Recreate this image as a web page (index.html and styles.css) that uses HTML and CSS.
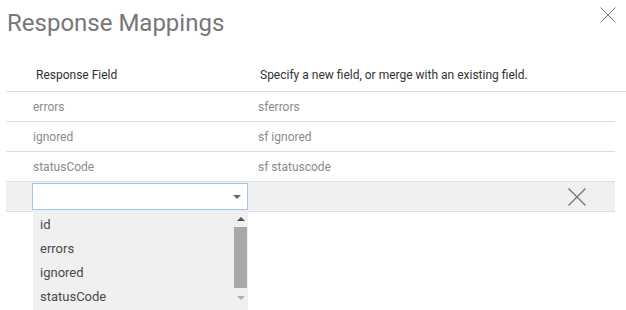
FILE: index.html
```html
<!DOCTYPE html>
<html>
<head>
<meta charset="utf-8">
<link rel="stylesheet" href="styles.css">
</head>
<body>
<div class="dialog">
  <div class="title-bar">
    <h1 class="title">Response Mappings</h1>
    <svg class="close" width="16" height="16" viewBox="0 0 16 16"><path d="M0.5 0.5L15.5 15.5M15.5 0.5L0.5 15.5" stroke="#777" stroke-width="1" fill="none"/></svg>
  </div>
  <div class="table">
    <div class="head-row">
      <div class="col-a">Response Field</div>
      <div class="col-b">Specify a new field, or merge with an existing field.</div>
    </div>
    <div class="row"><div class="col-a">errors</div><div class="col-b">sferrors</div></div>
    <div class="row"><div class="col-a">ignored</div><div class="col-b">sf ignored</div></div>
    <div class="row"><div class="col-a">statusCode</div><div class="col-b">sf statuscode</div></div>
    <div class="row edit-row">
      <div class="select-wrap">
        <div class="select">
          <span class="caret"></span>
        </div>
        <div class="dropdown">
          <ul class="options">
            <li>id</li>
            <li>errors</li>
            <li>ignored</li>
            <li>statusCode</li>
          </ul>
          <div class="scrollbar">
            <span class="sb-up"></span>
            <span class="sb-thumb"></span>
            <span class="sb-down"></span>
          </div>
        </div>
      </div>
      <svg class="remove" width="20" height="20" viewBox="0 0 20 20"><path d="M1.5 1.5L18.5 18.5M18.5 1.5L1.5 18.5" stroke="#777" stroke-width="1.4" fill="none"/></svg>
    </div>
  </div>
</div>
</body>
</html>
```
FILE: styles.css
```css
* { box-sizing: border-box; }
html, body { margin: 0; padding: 0; background: #fff; }
body { font-family: Roboto, "Liberation Sans", sans-serif; }
.dialog { width: 626px; height: 310px; overflow: hidden; }
.title-bar { display: flex; justify-content: space-between; align-items: flex-start; padding: 0 10px 0 7px; height: 56px; }
.title { margin: 9px 0 0 0; font-size: 24px; font-weight: 400; color: #777; line-height: 28px; }
.close { margin-top: 7px; }
.table { padding-left: 6px; }
.head-row { display: flex; height: 36px; align-items: center; border-bottom: 1px solid #ddd; font-size: 12px; color: #333; padding-top: 3px; }
.head-row .col-a { width: 224px; padding-left: 30px; }
.head-row .col-b { padding-left: 30px; }
.row { display: flex; height: 30px; align-items: center; border-bottom: 1px solid #ddd; font-size: 12px; color: #8a8a8a; width: 609px; }
.row .col-a { width: 225px; padding-left: 27px; }
.row .col-b { padding-left: 27px; }
.edit-row { background: #f0f0f0; position: relative; justify-content: space-between; padding-right: 28px; }
.select-wrap { position: relative; margin-left: 26px; }
.select { width: 216px; height: 27px; background: #fff; border: 1px solid #a4c2f4; position: relative; }
.caret { position: absolute; right: 6px; top: 11px; width: 0; height: 0; border-left: 4px solid transparent; border-right: 4px solid transparent; border-top: 4px solid #666; }
.dropdown { position: absolute; left: 1px; top: 28px; width: 215px; height: 99px; background: #f0f0f0; display: flex; justify-content: space-between; }
.options { list-style: none; margin: 0; padding: 2px 0 0 7px; font-size: 13px; color: #4a4a4a; }
.options li { height: 24px; line-height: 24px; }
.scrollbar { width: 15px; height: 100%; display: flex; flex-direction: column; align-items: center; padding: 0 2px; }
.sb-up { margin-top: 6px; width: 0; height: 0; border-left: 4px solid transparent; border-right: 4px solid transparent; border-bottom: 4px solid #505050; }
.sb-thumb { margin-top: 6px; width: 13px; height: 61px; background: #a8a8a8; }
.sb-down { margin-top: 8px; width: 0; height: 0; border-left: 4px solid transparent; border-right: 4px solid transparent; border-top: 4px solid #b0b0b0; }
.remove { display: block; }
```
